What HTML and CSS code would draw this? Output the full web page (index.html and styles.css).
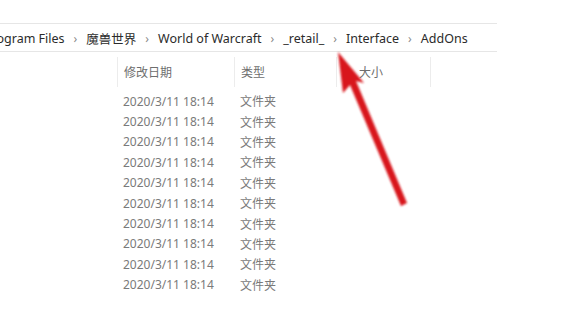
FILE: index.html
```html
<!DOCTYPE html>
<html lang="zh-CN">
<head>
<meta charset="utf-8">
<link rel="stylesheet" href="styles.css">
</head>
<body>
<div class="page">
  <div class="crumbs">
    <span class="crumb first">Program Files</span><span class="sep">›</span>
    <span class="crumb">魔兽世界</span><span class="sep">›</span>
    <span class="crumb">World of Warcraft</span><span class="sep">›</span>
    <span class="crumb">_retail_</span><span class="sep">›</span>
    <span class="crumb">Interface</span><span class="sep">›</span>
    <span class="crumb">AddOns</span>
  </div>
  <div class="table">
    <div class="head">
      <div class="hcol h-date">修改日期</div>
      <div class="hcol h-type">类型</div>
      <div class="hcol h-size">大小</div>
    </div>
    <div class="rows">
      <div class="row"><span class="c-date">2020/3/11 18:14</span><span class="c-type">文件夹</span></div>
      <div class="row"><span class="c-date">2020/3/11 18:14</span><span class="c-type">文件夹</span></div>
      <div class="row"><span class="c-date">2020/3/11 18:14</span><span class="c-type">文件夹</span></div>
      <div class="row"><span class="c-date">2020/3/11 18:14</span><span class="c-type">文件夹</span></div>
      <div class="row"><span class="c-date">2020/3/11 18:14</span><span class="c-type">文件夹</span></div>
      <div class="row"><span class="c-date">2020/3/11 18:14</span><span class="c-type">文件夹</span></div>
      <div class="row"><span class="c-date">2020/3/11 18:14</span><span class="c-type">文件夹</span></div>
      <div class="row"><span class="c-date">2020/3/11 18:14</span><span class="c-type">文件夹</span></div>
      <div class="row"><span class="c-date">2020/3/11 18:14</span><span class="c-type">文件夹</span></div>
      <div class="row"><span class="c-date">2020/3/11 18:14</span><span class="c-type">文件夹</span></div>
    </div>
  </div>
  <svg class="arrow" width="584" height="309" viewBox="0 0 584 309">
    <defs>
      <filter id="glow" x="-20%" y="-20%" width="140%" height="140%">
        <feGaussianBlur stdDeviation="0.8"/>
      </filter>
    </defs>
    <g filter="url(#glow)" fill="#d8161d">
      <polygon points="338,52 343,93 350,85 401,206 407,203 356,81 364,83"/>
    </g>
  </svg>
</div>
</body>
</html>
```
FILE: styles.css
```css
html, body {
  margin: 0;
  padding: 0;
  background: #ffffff;
}
.page {
  position: relative;
  width: 584px;
  height: 309px;
  overflow: hidden;
  font-family: "Noto Sans", "Noto Sans CJK SC", sans-serif;
}
.crumbs {
  margin-top: 23px;
  width: 497px;
  height: 25px;
  box-sizing: content-box;
  padding-top: 2px;
  border-top: 1px solid #e6e6e6;
  border-bottom: 1px solid #e6e6e6;
  display: flex;
  align-items: center;
  white-space: nowrap;
  font-size: 12.5px;
  color: #2b2b2b;
  overflow: hidden;
}
.crumb.first {
  margin-left: -16px;
}
.sep {
  color: #8a8a8a;
  font-size: 12px;
  margin: 0 9px 0 9px;
}
.table {
  margin-top: 5px;
  font-size: 12px;
}
.head {
  display: flex;
  height: 30px;
  padding-left: 117px;
  color: #6e6e6e;
}
.hcol {
  height: 30px;
  display: flex;
  align-items: center;
  box-sizing: border-box;
  border-left: 1px solid #ececec;
}
.h-date {
  width: 117px;
  padding-left: 6px;
}
.h-type {
  width: 102px;
  padding-left: 6px;
}
.h-size {
  width: 95px;
  padding-left: 22px;
  border-right: 1px solid #ececec;
}
.rows {
  margin-top: 4px;
  color: #7a7a7a;
}
.row {
  display: flex;
  height: 20.4px;
  align-items: center;
}
.c-date {
  margin-left: 123px;
  width: 117px;
}
.arrow {
  position: absolute;
  left: 0;
  top: 0;
}
```
